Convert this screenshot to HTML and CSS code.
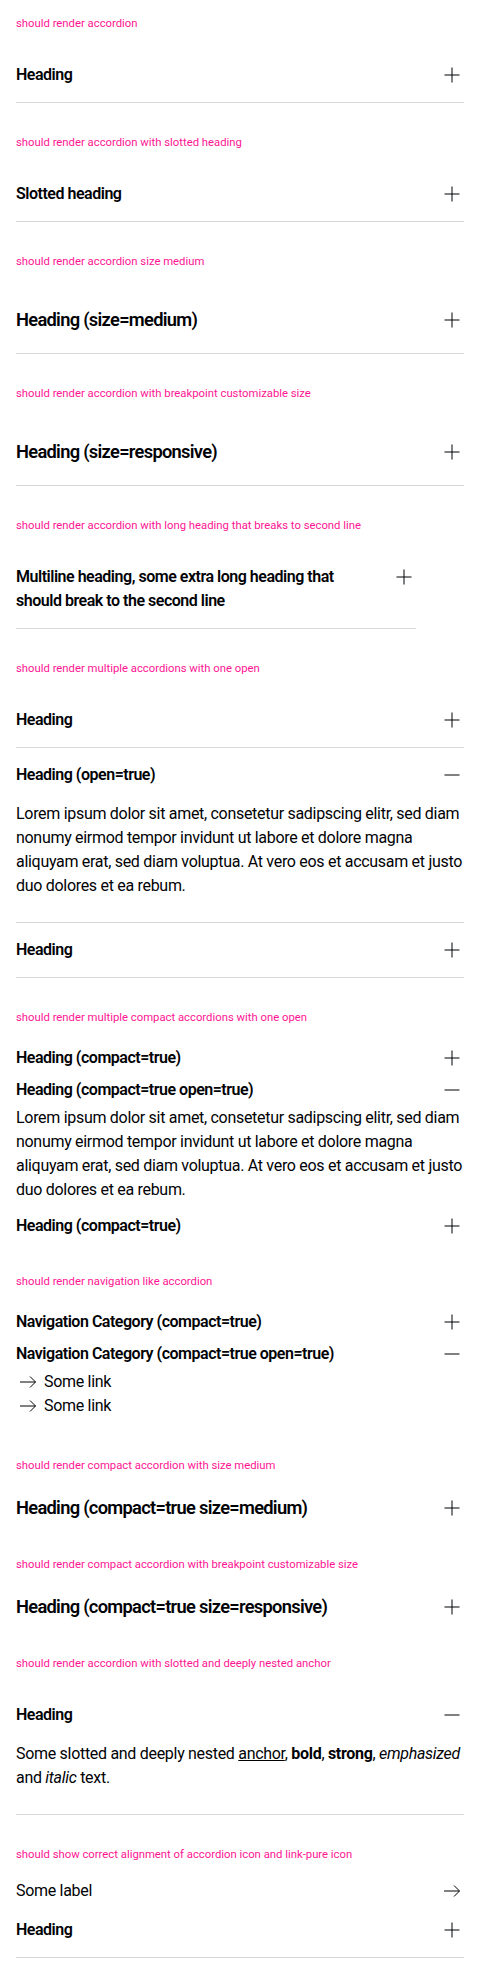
FILE: index.html
```html
<!DOCTYPE html>
<html lang="en">
<head>
<meta charset="utf-8">
<title>Accordion</title>
<link rel="stylesheet" href="styles.css">
</head>
<body>
<svg width="0" height="0" class="defs" aria-hidden="true">
  <defs>
    <symbol id="i-plus" viewBox="0 0 24 24"><path d="M12 4.5V19.5M4.5 12H19.5" fill="none" stroke="currentColor" stroke-width="1"/></symbol>
    <symbol id="i-minus" viewBox="0 0 24 24"><path d="M4.5 12H19.5" fill="none" stroke="currentColor" stroke-width="1"/></symbol>
    <symbol id="i-arrow" viewBox="0 0 24 24"><path d="M4 12H19.5M14 6.5L19.5 12L14 17.5" fill="none" stroke="currentColor" stroke-width="1"/></symbol>
  </defs>
</svg>
<main class="page">

  <section class="case">
    <p class="label">should render accordion</p>
    <div class="accordion">
      <div class="item">
        <button class="head"><span class="title">Heading</span><span class="icon-box"><svg class="icon"><use href="#i-plus"/></svg></span></button>
      </div>
    </div>
  </section>

  <section class="case">
    <p class="label">should render accordion with slotted heading</p>
    <div class="accordion">
      <div class="item">
        <button class="head"><span class="title">Slotted heading</span><span class="icon-box"><svg class="icon"><use href="#i-plus"/></svg></span></button>
      </div>
    </div>
  </section>

  <section class="case">
    <p class="label">should render accordion size medium</p>
    <div class="accordion">
      <div class="item medium">
        <button class="head"><span class="title">Heading (size=medium)</span><span class="icon-box"><svg class="icon"><use href="#i-plus"/></svg></span></button>
      </div>
    </div>
  </section>

  <section class="case">
    <p class="label">should render accordion with breakpoint customizable size</p>
    <div class="accordion">
      <div class="item medium">
        <button class="head"><span class="title">Heading (size=responsive)</span><span class="icon-box"><svg class="icon"><use href="#i-plus"/></svg></span></button>
      </div>
    </div>
  </section>

  <section class="case">
    <p class="label">should render accordion with long heading that breaks to second line</p>
    <div class="accordion narrow">
      <div class="item">
        <button class="head"><span class="title">Multiline heading, some extra long heading that should break to the second line</span><span class="icon-box"><svg class="icon"><use href="#i-plus"/></svg></span></button>
      </div>
    </div>
  </section>

  <section class="case">
    <p class="label">should render multiple accordions with one open</p>
    <div class="accordion">
      <div class="item">
        <button class="head"><span class="title">Heading</span><span class="icon-box"><svg class="icon"><use href="#i-plus"/></svg></span></button>
      </div>
      <div class="item open">
        <button class="head"><span class="title">Heading (open=true)</span><span class="icon-box"><svg class="icon"><use href="#i-minus"/></svg></span></button>
        <div class="content"><p class="text">Lorem ipsum dolor sit amet, consetetur sadipscing elitr, sed diam nonumy eirmod tempor invidunt ut labore et dolore magna aliquyam erat, sed diam voluptua. At vero eos et accusam et justo duo dolores et ea rebum.</p></div>
      </div>
      <div class="item">
        <button class="head"><span class="title">Heading</span><span class="icon-box"><svg class="icon"><use href="#i-plus"/></svg></span></button>
      </div>
    </div>
  </section>

  <section class="case">
    <p class="label">should render multiple compact accordions with one open</p>
    <div class="accordion">
      <div class="item compact">
        <button class="head"><span class="title">Heading (compact=true)</span><span class="icon-box"><svg class="icon"><use href="#i-plus"/></svg></span></button>
      </div>
      <div class="item compact open">
        <button class="head"><span class="title">Heading (compact=true open=true)</span><span class="icon-box"><svg class="icon"><use href="#i-minus"/></svg></span></button>
        <div class="content"><p class="text">Lorem ipsum dolor sit amet, consetetur sadipscing elitr, sed diam nonumy eirmod tempor invidunt ut labore et dolore magna aliquyam erat, sed diam voluptua. At vero eos et accusam et justo duo dolores et ea rebum.</p></div>
      </div>
      <div class="item compact">
        <button class="head"><span class="title">Heading (compact=true)</span><span class="icon-box"><svg class="icon"><use href="#i-plus"/></svg></span></button>
      </div>
    </div>
  </section>

  <section class="case">
    <p class="label">should render navigation like accordion</p>
    <div class="accordion">
      <div class="item compact">
        <button class="head"><span class="title">Navigation Category (compact=true)</span><span class="icon-box"><svg class="icon"><use href="#i-plus"/></svg></span></button>
      </div>
      <div class="item compact open">
        <button class="head"><span class="title">Navigation Category (compact=true open=true)</span><span class="icon-box"><svg class="icon"><use href="#i-minus"/></svg></span></button>
        <div class="content">
          <ul class="links">
            <li><a class="link" href="#"><svg class="icon"><use href="#i-arrow"/></svg><span>Some link</span></a></li>
            <li><a class="link" href="#"><svg class="icon"><use href="#i-arrow"/></svg><span>Some link</span></a></li>
          </ul>
        </div>
      </div>
    </div>
  </section>

  <section class="case">
    <p class="label">should render compact accordion with size medium</p>
    <div class="accordion">
      <div class="item compact medium">
        <button class="head"><span class="title">Heading (compact=true size=medium)</span><span class="icon-box"><svg class="icon"><use href="#i-plus"/></svg></span></button>
      </div>
    </div>
  </section>

  <section class="case">
    <p class="label">should render compact accordion with breakpoint customizable size</p>
    <div class="accordion">
      <div class="item compact medium">
        <button class="head"><span class="title">Heading (compact=true size=responsive)</span><span class="icon-box"><svg class="icon"><use href="#i-plus"/></svg></span></button>
      </div>
    </div>
  </section>

  <section class="case">
    <p class="label">should render accordion with slotted and deeply nested anchor</p>
    <div class="accordion">
      <div class="item open">
        <button class="head"><span class="title">Heading</span><span class="icon-box"><svg class="icon"><use href="#i-minus"/></svg></span></button>
        <div class="content"><p class="text">Some slotted and deeply nested <a class="anchor" href="#">anchor</a>, <b>bold</b>, <strong>strong</strong>, <em>emphasized</em> and <i>italic</i> text.</p></div>
      </div>
    </div>
  </section>

  <section class="case">
    <p class="label">should show correct alignment of accordion icon and link-pure icon</p>
    <div class="stack">
      <a class="link-pure" href="#"><span>Some label</span><svg class="icon"><use href="#i-arrow"/></svg></a>
      <div class="accordion">
        <div class="item">
          <button class="head"><span class="title">Heading</span><span class="icon-box"><svg class="icon"><use href="#i-plus"/></svg></span></button>
        </div>
      </div>
    </div>
  </section>

</main>
</body>
</html>
```

FILE: styles.css
```css
* { box-sizing: border-box; }

html, body {
  margin: 0;
  background: #ffffff;
}

body {
  font-family: Roboto, "Liberation Sans", Arial, sans-serif;
  color: #010205;
  -webkit-font-smoothing: antialiased;
}

.defs {
  position: absolute;
  width: 0;
  height: 0;
  overflow: hidden;
}

.page {
  display: flex;
  flex-direction: column;
  gap: 32px;
  padding: 16px 16px 0;
}

.case {
  display: flex;
  flex-direction: column;
  gap: 16px;
}

.label {
  margin: 0;
  font-size: 11.3px;
  line-height: 16px;
  color: #ff1493;
}

.accordion {
  display: flex;
  flex-direction: column;
}

.accordion.narrow {
  width: 400px;
}

.item {
  border-bottom: 1px solid #d8d8db;
}

.item.compact {
  border-bottom: none;
}

.head {
  display: flex;
  align-items: flex-start;
  justify-content: space-between;
  gap: 24px;
  width: 100%;
  margin: 0;
  padding: 15px 0;
  border: 0;
  background: none;
  color: inherit;
  font: inherit;
  text-align: left;
  cursor: pointer;
}

.title {
  font-size: 16px;
  line-height: 24px;
  font-weight: 600;
  letter-spacing: -0.48px;
}

.icon-box {
  display: flex;
  align-items: center;
  height: 24px;
  flex-shrink: 0;
}

.icon {
  display: block;
  width: 24px;
  height: 24px;
  color: #010205;
  flex-shrink: 0;
}

.medium .head {
  padding: 20px 0;
}

.medium .title {
  font-size: 18.3px;
  line-height: 27px;
  letter-spacing: -0.7px;
}

.medium .icon-box {
  height: 27px;
}

.compact .head {
  padding: 4px 0;
}

.compact.medium .head {
  padding: 4px 0;
}

.content {
  padding: 0 0 24px;
}

.compact .content {
  padding: 0 0 8px;
}

.text {
  margin: 0;
  font-size: 16px;
  line-height: 24px;
  letter-spacing: -0.3px;
}

.anchor {
  color: inherit;
  text-decoration: underline;
}

.links {
  list-style: none;
  margin: 0;
  padding: 0;
}

.link {
  display: flex;
  align-items: center;
  gap: 4px;
  color: inherit;
  text-decoration: none;
  font-size: 16px;
  line-height: 24px;
  letter-spacing: -0.3px;
}

.stack {
  display: flex;
  flex-direction: column;
}

.link-pure {
  display: flex;
  align-items: center;
  justify-content: space-between;
  color: inherit;
  text-decoration: none;
  font-size: 16px;
  line-height: 24px;
  letter-spacing: -0.3px;
}
```
